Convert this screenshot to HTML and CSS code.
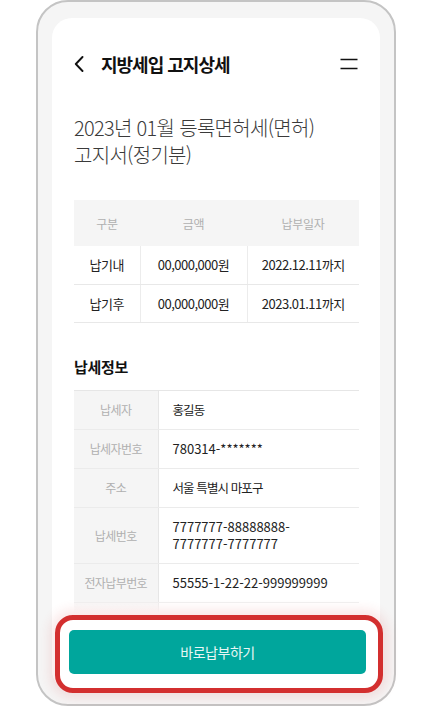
FILE: index.html
```html
<!DOCTYPE html>
<html lang="ko">
<head>
<meta charset="utf-8">
<title>지방세입 고지상세</title>
<link rel="stylesheet" href="styles.css">
</head>
<body>
<div class="phone">
  <div class="screen">
    <header class="topbar">
      <button class="back" aria-label="뒤로">
        <svg width="10" height="16" viewBox="0 0 10 16"><path d="M8.5 1 L1.8 8 L8.5 15" fill="none" stroke="#111" stroke-width="1.9" stroke-linecap="round" stroke-linejoin="round"/></svg>
      </button>
      <h1 class="page-title">지방세입 고지상세</h1>
      <button class="menu" aria-label="메뉴">
        <svg width="18" height="12" viewBox="0 0 18 12"><path d="M0.5 1.5 H17.5 M0.5 10.5 H17.5" stroke="#111" stroke-width="1.7"/></svg>
      </button>
    </header>
    <main class="content">
      <h2 class="notice-title">2023년 01월 등록면허세(면허)<br>고지서(정기분)</h2>
      <table class="pay-table">
        <thead>
          <tr><th>구분</th><th>금액</th><th>납부일자</th></tr>
        </thead>
        <tbody>
          <tr><td>납기내</td><td>00,000,000원</td><td>2022.12.11까지</td></tr>
          <tr><td>납기후</td><td>00,000,000원</td><td>2023.01.11까지</td></tr>
        </tbody>
      </table>
      <h3 class="section-title">납세정보</h3>
      <table class="info-table">
        <tbody>
          <tr><th>납세자</th><td>홍길동</td></tr>
          <tr><th>납세자번호</th><td class="num">780314-*******</td></tr>
          <tr><th>주소</th><td>서울 특별시 마포구</td></tr>
          <tr><th>납세번호</th><td class="num">7777777-88888888-7777777-7777777</td></tr>
          <tr><th>전자납부번호</th><td class="num">55555-1-22-22-999999999</td></tr>
          <tr class="row-empty"><th></th><td></td></tr>
        </tbody>
      </table>
    </main>
    <footer class="bottom-bar">
      <button class="pay-btn">바로납부하기</button>
    </footer>
  </div>
  <div class="highlight" aria-hidden="true"></div>
</div>
</body>
</html>
```
FILE: styles.css
```css
* { box-sizing: border-box; }
html, body {
  margin: 0;
  padding: 0;
  background: #ffffff;
}
body {
  font-family: "Noto Sans CJK KR", "Noto Sans", sans-serif;
  color: #222;
}
.phone {
  position: relative;
  width: 360px;
  height: 706px;
  margin: 0 0 0 36px;
  border: 2px solid #c4c4c4;
  border-radius: 32px;
  background: #f5f5f5;
  padding: 16px 14px 14px 14px;
}
.screen {
  height: 100%;
  background: #fff;
  border-radius: 20px;
  overflow: hidden;
  display: flex;
  flex-direction: column;
}
.topbar {
  flex: none;
  height: 40px;
  margin-top: 26px;
  padding: 0 21px 0 22px;
  display: flex;
  align-items: center;
}
.back, .menu {
  border: 0;
  background: none;
  padding: 0;
  display: flex;
  align-items: center;
  cursor: pointer;
}
.page-title {
  margin: 0 0 0 17px;
  flex: 1;
  font-size: 18px;
  font-weight: 700;
  letter-spacing: -1px;
  color: #111;
}
.menu { margin-right: 1px; }
.content {
  flex: 1;
  min-height: 0;
  overflow: hidden;
  padding: 0 21px 0 22px;
}
.notice-title {
  margin: 30px 0 0;
  font-size: 20px;
  line-height: 27px;
  font-weight: 300;
  letter-spacing: -0.7px;
  color: #3a3a3a;
}
.pay-table {
  width: 100%;
  margin-top: 32px;
  border-collapse: collapse;
  table-layout: fixed;
}
.pay-table th:nth-child(1), .pay-table td:nth-child(1) { width: 66px; }
.pay-table th:nth-child(2), .pay-table td:nth-child(2) { width: 107px; }
.pay-table th {
  height: 46px;
  background: #f5f5f5;
  font-size: 12px;
  font-weight: 400;
  color: #b0b0b0;
  letter-spacing: -0.3px;
}
.pay-table td {
  height: 38px;
  text-align: center;
  font-size: 13px;
  letter-spacing: -0.5px;
  color: #222;
  border-bottom: 1px solid #e8e8e8;
}
.pay-table td + td { border-left: 1px solid #ececec; }
.section-title {
  margin: 33px 0 0;
  font-size: 15px;
  line-height: 22px;
  font-weight: 700;
  letter-spacing: -0.3px;
  color: #111;
}
.info-table {
  width: 100%;
  margin-top: 12px;
  border-collapse: collapse;
  table-layout: fixed;
  border-top: 1px solid #e6e6e6;
}
.info-table th {
  width: 84px;
  background: #f5f5f5;
  border-right: 1px solid #e6e6e6;
  font-size: 12px;
  font-weight: 400;
  color: #b0b0b0;
  letter-spacing: -0.6px;
  text-align: center;
}
.info-table th, .info-table td {
  padding: 10.5px 0;
  line-height: 17px;
  border-bottom: 1px solid #ebebeb;
  vertical-align: middle;
}
.info-table td {
  padding-left: 14px;
  padding-right: 20px;
  font-size: 12.5px;
  letter-spacing: -0.9px;
  color: #222;
}
.info-table td.num {
  font-size: 13px;
  letter-spacing: 0;
}
.info-table .row-empty th,
.info-table .row-empty td { height: 40px; }
.bottom-bar {
  position: relative;
  flex: none;
  padding: 17px 14px 16px 17px;
  background: #fff;
}
.bottom-bar::before {
  content: "";
  position: absolute;
  left: 0;
  right: 0;
  top: -14px;
  height: 14px;
  background: linear-gradient(rgba(255,255,255,0), #fff);
}
.pay-btn {
  display: block;
  width: 100%;
  height: 44px;
  border: 0;
  border-radius: 5px;
  background: #00a69c;
  color: #e8f6f4;
  font-family: inherit;
  font-size: 14px;
  letter-spacing: -0.5px;
}
.highlight {
  position: absolute;
  left: 17px;
  top: 613px;
  width: 328px;
  height: 78px;
  border: 5px solid #d32f2f;
  border-radius: 18px;
  box-shadow: 0 0 12px 5px rgba(211, 47, 47, 0.12);
  pointer-events: none;
}
```
